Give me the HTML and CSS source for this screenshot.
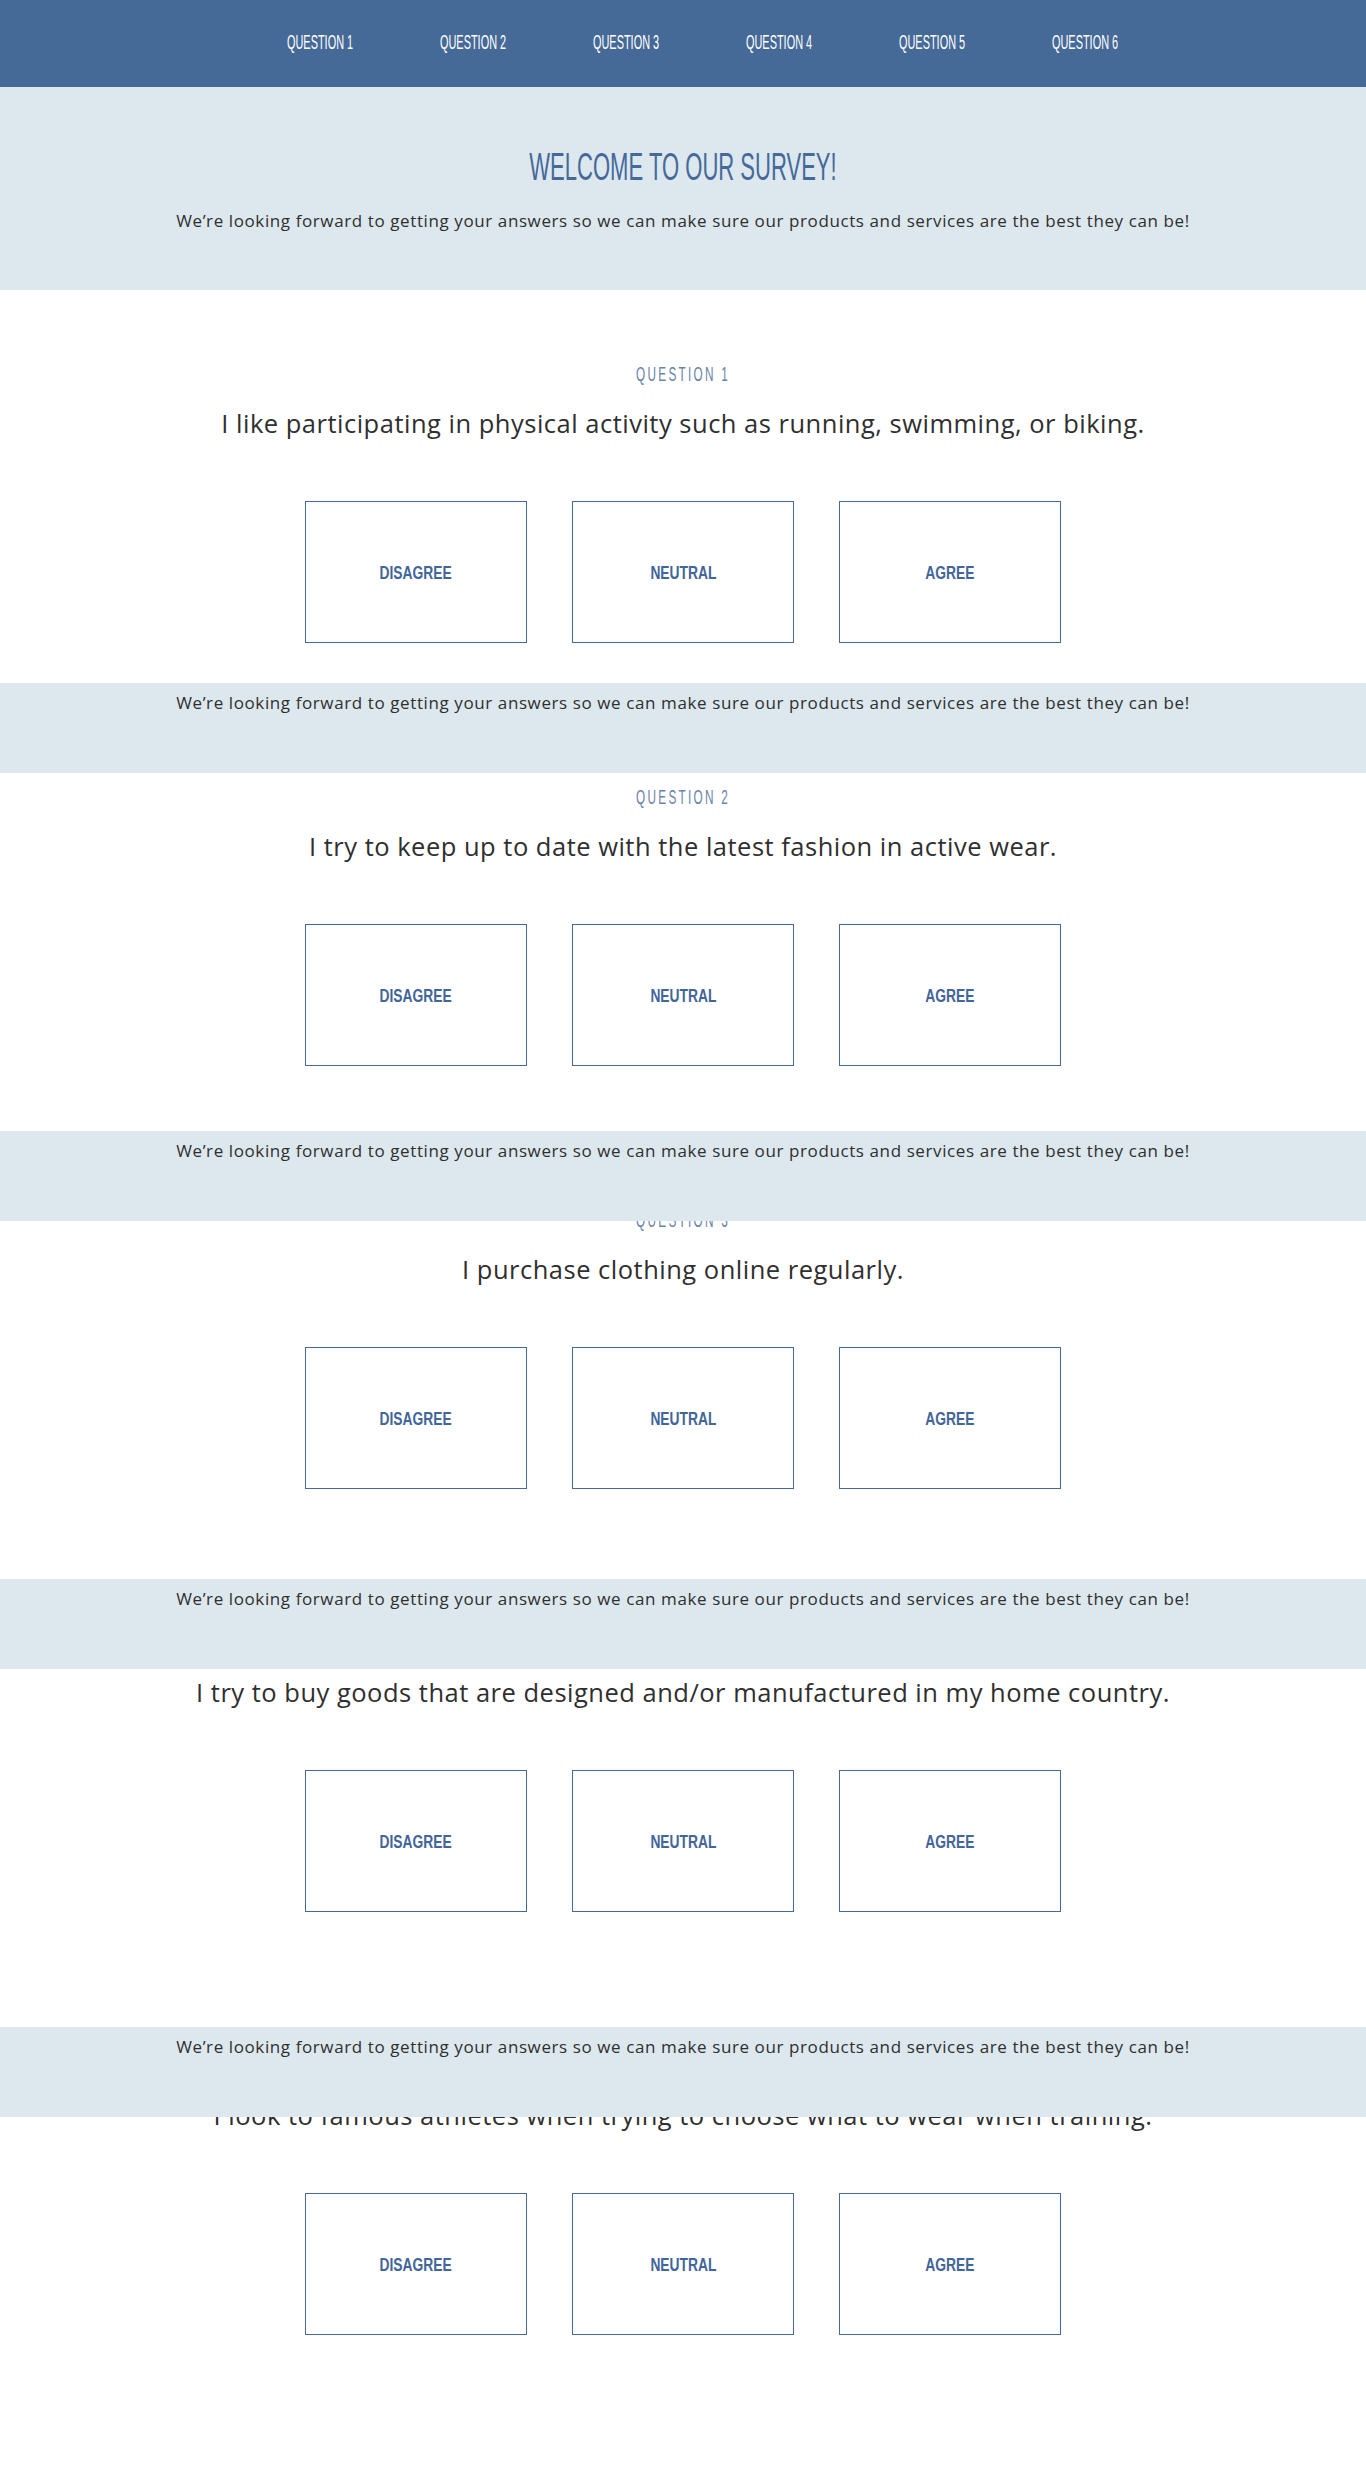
FILE: index.html
```html
<!DOCTYPE html>
<html lang="en">
<head>
<meta charset="utf-8">
<title>Survey</title>
<link rel="stylesheet" href="styles.css">
</head>
<body>
<nav class="topnav">
  <ul class="topnav-list">
    <li class="topnav-item"><a class="topnav-link" href="#q1">Question 1</a></li>
    <li class="topnav-item"><a class="topnav-link" href="#q2">Question 2</a></li>
    <li class="topnav-item"><a class="topnav-link" href="#q3">Question 3</a></li>
    <li class="topnav-item"><a class="topnav-link" href="#q4">Question 4</a></li>
    <li class="topnav-item"><a class="topnav-link" href="#q5">Question 5</a></li>
    <li class="topnav-item"><a class="topnav-link" href="#q6">Question 6</a></li>
  </ul>
</nav>

<header class="hero">
  <h1 class="hero-title"><span class="condensed">Welcome to our survey!</span></h1>
  <p class="hero-text">We’re looking forward to getting your answers so we can make sure our products and services are the best they can be!</p>
</header>

<main class="questions">
  <section class="question" id="q1">
    <h2 class="question-label"><span class="condensed">Question 1</span></h2>
    <p class="question-text">I like participating in physical activity such as running, swimming, or biking.</p>
    <div class="answers">
      <button class="answer"><span class="condensed">Disagree</span></button>
      <button class="answer"><span class="condensed">Neutral</span></button>
      <button class="answer"><span class="condensed">Agree</span></button>
    </div>
  </section>
  <section class="question" id="q2">
    <h2 class="question-label"><span class="condensed">Question 2</span></h2>
    <p class="question-text">I try to keep up to date with the latest fashion in active wear.</p>
    <div class="answers">
      <button class="answer"><span class="condensed">Disagree</span></button>
      <button class="answer"><span class="condensed">Neutral</span></button>
      <button class="answer"><span class="condensed">Agree</span></button>
    </div>
  </section>
  <section class="question" id="q3">
    <h2 class="question-label"><span class="condensed">Question 3</span></h2>
    <p class="question-text">I purchase clothing online regularly.</p>
    <div class="answers">
      <button class="answer"><span class="condensed">Disagree</span></button>
      <button class="answer"><span class="condensed">Neutral</span></button>
      <button class="answer"><span class="condensed">Agree</span></button>
    </div>
  </section>
  <section class="question" id="q4">
    <h2 class="question-label"><span class="condensed">Question 4</span></h2>
    <p class="question-text">I try to buy goods that are designed and/or manufactured in my home country.</p>
    <div class="answers">
      <button class="answer"><span class="condensed">Disagree</span></button>
      <button class="answer"><span class="condensed">Neutral</span></button>
      <button class="answer"><span class="condensed">Agree</span></button>
    </div>
  </section>
  <section class="question" id="q5">
    <h2 class="question-label"><span class="condensed">Question 5</span></h2>
    <p class="question-text">I look to famous athletes when trying to choose what to wear when training.</p>
    <div class="answers">
      <button class="answer"><span class="condensed">Disagree</span></button>
      <button class="answer"><span class="condensed">Neutral</span></button>
      <button class="answer"><span class="condensed">Agree</span></button>
    </div>
  </section>
</main>

<div class="band band-1"><p class="hero-text">We’re looking forward to getting your answers so we can make sure our products and services are the best they can be!</p></div>
<div class="band band-2"><p class="hero-text">We’re looking forward to getting your answers so we can make sure our products and services are the best they can be!</p></div>
<div class="band band-3"><p class="hero-text">We’re looking forward to getting your answers so we can make sure our products and services are the best they can be!</p></div>
<div class="band band-4"><p class="hero-text">We’re looking forward to getting your answers so we can make sure our products and services are the best they can be!</p></div>
</body>
</html>
```

FILE: styles.css
```css
* { box-sizing: border-box; }

html, body {
  margin: 0;
  padding: 0;
  background: #ffffff;
}

body {
  position: relative;
  min-height: 2475px;
  font-family: "Open Sans", "Noto Sans", sans-serif;
  color: #2f2f2f;
}

.condensed {
  display: inline-block;
  font-family: "Liberation Sans", Arial, sans-serif;
  transform-origin: center center;
}

/* top navigation */
.topnav {
  background: #466a97;
  height: 87px;
  padding-top: 32px;
}

.topnav-list {
  list-style: none;
  margin: 0;
  padding: 0 0 0 40px;
  display: flex;
  justify-content: center;
}

.topnav-item {
  width: 153px;
  text-align: center;
}

.topnav-link {
  display: inline-block;
  font-family: "Liberation Sans", Arial, sans-serif;
  font-size: 19.5px;
  line-height: 19.5px;
  color: #ffffff;
  text-decoration: none;
  text-transform: uppercase;
  transform: scaleX(0.56);
}

/* hero */
.hero {
  background: #dce8ee;
  height: 203px;
  padding-top: 59px;
  text-align: center;
}

.hero-title {
  margin: 0 0 25px;
  font-weight: normal;
  font-size: 38px;
  line-height: 38px;
  color: #46699a;
  text-transform: uppercase;
}

.hero-title .condensed {
  transform: scaleX(0.58);
}

.hero-text {
  margin: 0;
  font-size: 17px;
  line-height: 20px;
  letter-spacing: 0.6px;
  color: #2f2f2f;
  text-align: center;
}

/* overlay bands */
.band {
  position: absolute;
  left: 0;
  right: 0;
  height: 90px;
  padding-top: 10px;
  background: #dce8ee;
}

.band-1 { top: 683px; }
.band-2 { top: 1131px; }
.band-3 { top: 1579px; }
.band-4 { top: 2027px; }

/* questions */
.question {
  height: 423px;
  padding-top: 73px;
  text-align: center;
}

.question-label {
  margin: 0 0 24px;
  font-weight: normal;
  font-size: 21px;
  line-height: 21px;
  color: #6a83a8;
  text-transform: uppercase;
}

.question-label .condensed {
  letter-spacing: 4.1px;
  transform: scaleX(0.56);
}

.question-text {
  margin: 0 0 63px;
  font-size: 25.5px;
  line-height: 30px;
  letter-spacing: 0.5px;
  color: #2f2f2f;
}

.answers {
  display: flex;
  justify-content: center;
  gap: 45px;
}

.answer {
  width: 222px;
  height: 142px;
  margin: 0;
  padding: 0;
  border: 1px solid #46699a;
  background: #ffffff;
  display: flex;
  align-items: center;
  justify-content: center;
  cursor: pointer;
}

.answer .condensed {
  font-weight: bold;
  font-size: 19px;
  line-height: 19px;
  color: #42659a;
  text-transform: uppercase;
  transform: scaleX(0.727);
}
```
